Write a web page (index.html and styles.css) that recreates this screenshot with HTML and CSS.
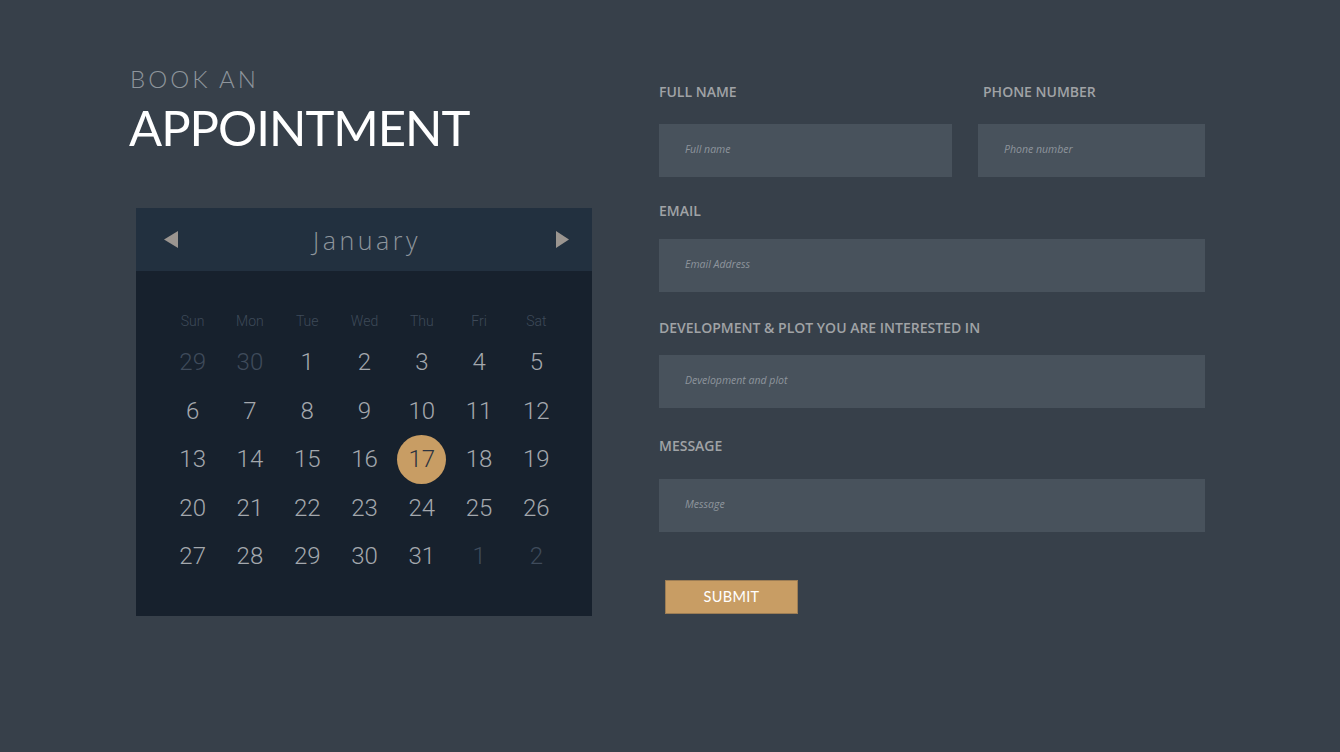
FILE: index.html
```html
<!DOCTYPE html>
<html lang="en">

<head>
  <meta charset="UTF-8">
  <meta name="viewport" content="width=device-width, initial-scale=1.0">
  <title>Book an appointment</title>
  <link rel="stylesheet" href="styles.css">
</head>

<body>
  <div class="page">
    <div class="left-column">
      <div class="title">
        <div class="title-small">BOOK AN</div>
        <h1 class="title-big">APPOINTMENT</h1>
      </div>

      <div class="calendar">
        <div class="calendar-header">
          <button class="nav-btn prev" aria-label="Previous month">
            <svg width="14" height="17" viewBox="0 0 14 17"><polygon points="14,0 14,17 0,8.5" fill="#9b9590"/></svg>
          </button>
          <div class="month">January</div>
          <button class="nav-btn next" aria-label="Next month">
            <svg width="13" height="17" viewBox="0 0 13 17"><polygon points="0,0 0,17 13,8.5" fill="#9b9590"/></svg>
          </button>
        </div>
        <div class="calendar-body">
          <div class="weekdays">
            <div>Sun</div><div>Mon</div><div>Tue</div><div>Wed</div><div>Thu</div><div>Fri</div><div>Sat</div>
          </div>
          <div class="days">
            <div class="day muted">29</div><div class="day muted">30</div><div class="day">1</div><div class="day">2</div><div class="day">3</div><div class="day">4</div><div class="day">5</div>
            <div class="day">6</div><div class="day">7</div><div class="day">8</div><div class="day">9</div><div class="day">10</div><div class="day">11</div><div class="day">12</div>
            <div class="day">13</div><div class="day">14</div><div class="day">15</div><div class="day">16</div><div class="day selected"><span>17</span></div><div class="day">18</div><div class="day">19</div>
            <div class="day">20</div><div class="day">21</div><div class="day">22</div><div class="day">23</div><div class="day">24</div><div class="day">25</div><div class="day">26</div>
            <div class="day">27</div><div class="day">28</div><div class="day">29</div><div class="day">30</div><div class="day">31</div><div class="day muted">1</div><div class="day muted">2</div>
          </div>
        </div>
      </div>
    </div>

    <form class="form" onsubmit="return false;">
      <div class="row">
        <div class="field name-field">
          <label for="fullName">FULL NAME</label>
          <input id="fullName" type="text" placeholder="Full name">
        </div>
        <div class="field phone-field">
          <label for="phone">PHONE NUMBER</label>
          <input id="phone" type="text" placeholder="Phone number">
        </div>
      </div>
      <div class="field email-field">
        <label for="email">EMAIL</label>
        <input id="email" type="text" placeholder="Email Address">
      </div>
      <div class="field plot-field">
        <label for="plot">DEVELOPMENT &amp; PLOT YOU ARE INTERESTED IN</label>
        <input id="plot" type="text" placeholder="Development and plot">
      </div>
      <div class="field message-field">
        <label for="message">MESSAGE</label>
        <input id="message" type="text" placeholder="Message">
      </div>
      <button type="submit" class="submit-btn">SUBMIT</button>
    </form>
  </div>
</body>

</html>
```

FILE: styles.css
```css
body {
  margin: 0;
  padding: 0;
  background-color: #37404a;
  font-family: "Open Sans", sans-serif;
  height: 752px;
  overflow: hidden;
}

.page {
  display: flex;
  flex-direction: row;
  align-items: flex-start;
  padding: 63px 0 0 130px;
}

.left-column {
  width: 462px;
  display: flex;
  flex-direction: column;
}

.title-small {
  font-family: "Lato", sans-serif;
  font-weight: 300;
  font-size: 24px;
  line-height: 32px;
  letter-spacing: 3px;
  color: #8e959c;
}

.title-big {
  margin: 4px 0 0 -1px;
  font-family: "Lato", sans-serif;
  font-weight: 400;
  font-size: 49px;
  line-height: 56px;
  letter-spacing: -1px;
  color: #ffffff;
}

.calendar {
  margin: 53px 0 0 6px;
  width: 456px;
  background-color: #17212d;
}

.calendar-header {
  height: 63px;
  background-color: #22303f;
  display: flex;
  align-items: center;
  justify-content: space-between;
  padding: 0 23px 0 28px;
}

.nav-btn {
  background: none;
  border: none;
  padding: 0;
  margin: 0;
  display: flex;
  cursor: pointer;
}

.month {
  font-family: "Open Sans", sans-serif;
  font-weight: 300;
  font-size: 25px;
  letter-spacing: 3.5px;
  color: #8e959c;
}

.calendar-body {
  padding: 40px 27px 35px 28px;
}

.weekdays {
  display: grid;
  grid-template-columns: repeat(7, 1fr);
  height: 20px;
  line-height: 20px;
  margin-bottom: 7px;
  font-family: "Roboto", sans-serif;
  font-weight: 300;
  font-size: 14px;
  color: #3e4a59;
  text-align: center;
}

.days {
  display: grid;
  grid-template-columns: repeat(7, 1fr);
  grid-auto-rows: 48.5px;
}

.day {
  display: flex;
  align-items: center;
  justify-content: center;
  font-family: "Roboto", sans-serif;
  font-weight: 300;
  font-size: 24px;
  color: #a4a8ad;
}

.day.muted {
  color: #3f4b5b;
}

.day.selected span {
  display: flex;
  align-items: center;
  justify-content: center;
  width: 49px;
  height: 49px;
  border-radius: 50%;
  background-color: #c89d64;
  color: #2c3340;
}

.form {
  margin-left: 67px;
  margin-top: 19px;
  width: 546px;
  display: flex;
  flex-direction: column;
}

.row {
  display: flex;
  gap: 26px;
}

.name-field {
  width: 293px;
}

.phone-field {
  flex: 1;
}

.phone-field label {
  padding-left: 5px;
}

.field {
  display: flex;
  flex-direction: column;
  margin-bottom: 24px;
}

.field label {
  font-family: "Open Sans", sans-serif;
  font-weight: 600;
  font-size: 14px;
  line-height: 20px;
  color: #a0a3a6;
  margin-bottom: 22px;
}

.email-field {
  margin-bottom: 26px;
}

.email-field label {
  margin-bottom: 18px;
}

.plot-field {
  margin-bottom: 28px;
}

.plot-field label {
  margin-bottom: 17px;
}

.message-field {
  margin-bottom: 0;
}

.message-field label {
  margin-bottom: 23px;
}

.field input {
  height: 53px;
  box-sizing: border-box;
  border: none;
  outline: none;
  background-color: #48525c;
  padding: 0 26px 3px;
  font-family: "Open Sans", sans-serif;
  font-style: italic;
  font-size: 10.5px;
  color: #c5c9cc;
}

.field input::placeholder {
  color: #8e959c;
}

.submit-btn {
  align-self: flex-start;
  margin: 48px 0 0 6px;
  width: 133px;
  height: 34px;
  background-color: #c89d64;
  border: 1px solid #9c7d55;
  color: #ffffff;
  font-family: "Lato", sans-serif;
  font-weight: 400;
  font-size: 14.5px;
  letter-spacing: 0.3px;
  padding: 0 0 1px;
  cursor: pointer;
}
```
